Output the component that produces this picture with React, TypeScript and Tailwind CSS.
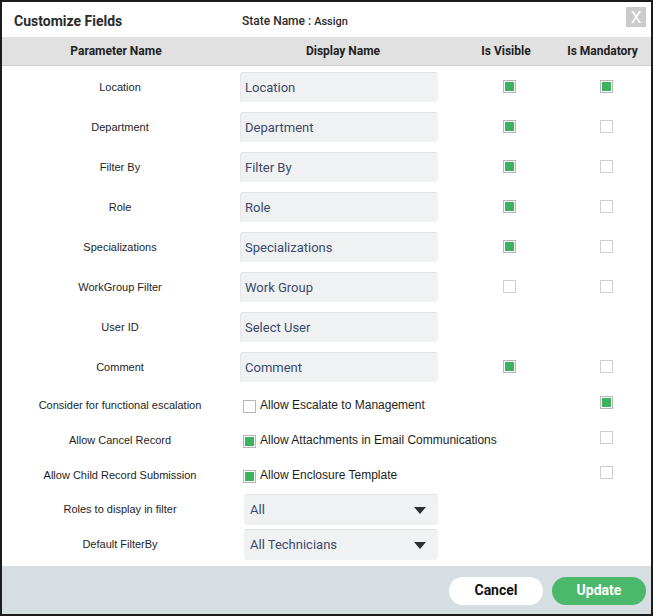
import React from "react";

const Box = ({ checked, light }: { checked?: boolean; light?: boolean }) => (
  <div
    className={`w-[13px] h-[13px] border ${light ? "border-[#cfcfcf]" : "border-[#b8b8b8]"} bg-white p-[1px]`}
  >
    {checked && <div className="w-full h-full bg-[#3cb35e]" />}
  </div>
);

const rows: { label: string; value: string; vis: boolean | null; man: boolean | null }[] = [
  { label: "Location", value: "Location", vis: true, man: true },
  { label: "Department", value: "Department", vis: true, man: false },
  { label: "Filter By", value: "Filter By", vis: true, man: false },
  { label: "Role", value: "Role", vis: true, man: false },
  { label: "Specializations", value: "Specializations", vis: true, man: false },
  { label: "WorkGroup Filter", value: "Work Group", vis: false, man: false },
  { label: "User ID", value: "Select User", vis: null, man: null },
  { label: "Comment", value: "Comment", vis: true, man: false },
];

const opts = [
  { label: "Consider for functional escalation", text: "Allow Escalate to Management", c: false, man: true },
  { label: "Allow Cancel Record", text: "Allow Attachments in Email Communications", c: true, man: false },
  { label: "Allow Child Record Submission", text: "Allow Enclosure Template", c: true, man: false },
];

const selects = [
  { label: "Roles to display in filter", value: "All" },
  { label: "Default FilterBy", value: "All Technicians" },
];

export default function App() {
  const lab = "text-[11px] text-[#1e1e1e] font-['Liberation_Sans',Arial,sans-serif] pl-[8px]";
  return (
    <div className="w-[653px] h-[616px] border-2 border-[#1c1c1c] bg-white flex flex-col font-['Roboto',sans-serif] overflow-hidden">
      {/* header */}
      <div className="h-[35px] flex items-center relative shrink-0 pt-[4px]">
        <div className="pl-[12px] w-[240px] text-[14px] font-bold text-[#2b2b2b]">Customize Fields</div>
        <div className="text-[12px] font-medium text-[#2b2b2b]">
          State Name : <span className="text-[11px]">Assign</span>
        </div>
        <div className="absolute right-[5px] top-[5px] w-[20px] h-[20px] bg-[#cbcbcb] text-white text-[17px] leading-[20px] text-center">
          X
        </div>
      </div>
      {/* table header */}
      <div className="h-[29px] shrink-0 bg-[#e1e1e1] border-b border-[#cfcfcf] grid grid-cols-[228px_230px_98px_1fr] items-center text-[12px] font-bold text-[#222]">
        <div className="text-center">Parameter Name</div>
        <div className="text-center pr-[4px]">Display Name</div>
        <div className="text-center pr-[6px]">Is Visible</div>
        <div className="text-center pr-[4px]">Is Mandatory</div>
      </div>
      {/* rows */}
      <div className="flex flex-col pt-[1px]">
        {rows.map((r) => (
          <div key={r.label} className="h-[40px] grid grid-cols-[228px_230px_98px_1fr] items-center">
            <div className={`text-center ${lab}`}>{r.label}</div>
            <div className="pl-[10px]">
              <div className="w-[198px] h-[30px] rounded-[3px] bg-[#f0f1f3] border-t border-[#e2e3e6] shadow-[inset_1px_0_0_#e6e7ea] flex items-center pl-[5px] text-[13px] text-[#3a4a6c]">
                {r.value}
              </div>
            </div>
            <div className="flex justify-center pb-[1px]">{r.vis !== null && <Box checked={r.vis} light={!r.vis} />}</div>
            <div className="flex justify-center pl-[4px] pb-[1px]">{r.man !== null && <Box checked={r.man} light={!r.man} />}</div>
          </div>
        ))}
        {opts.map((o) => (
          <div key={o.label} className="h-[35px] grid grid-cols-[228px_230px_98px_1fr] items-center">
            <div className={`text-center ${lab} pt-[2px]`}>{o.label}</div>
            <div className="pl-[13px] flex items-center gap-[4px] whitespace-nowrap">
              <div className="mt-[3px]">
                <Box checked={o.c} />
              </div>
              <span className="text-[12px] text-[#1e1e1e] font-['Liberation_Sans',Arial,sans-serif]">{o.text}</span>
            </div>
            <div />
            <div className="flex justify-center pl-[4px] mb-[4px]">
              <Box checked={o.man} light={!o.man} />
            </div>
          </div>
        ))}
        {selects.map((s) => (
          <div key={s.label} className="h-[35px] grid grid-cols-[228px_230px_98px_1fr] items-center">
            <div className={`text-center ${lab}`}>{s.label}</div>
            <div className="pl-[14px]">
              <div className="w-[194px] h-[31px] rounded-[3px] bg-[#f0f1f3] border-t border-[#e2e3e6] flex items-center justify-between pl-[6px] pr-[12px] text-[13px] text-[#3a4a6c]">
                <span>{s.value}</span>
                <svg width="12" height="7" viewBox="0 0 12 7">
                  <path d="M0 0 L12 0 L6 7 Z" fill="#2e2e2e" />
                </svg>
              </div>
            </div>
            <div />
            <div />
          </div>
        ))}
      </div>
      <div className="flex-1" />
      {/* footer */}
      <div className="h-[48px] shrink-0 bg-[#d7dee1] flex items-center justify-end gap-[9px] pr-[5px] pt-[1px]">
        <button className="w-[94px] h-[28px] rounded-full bg-white text-[14px] font-bold text-[#111]">Cancel</button>
        <button className="w-[94px] h-[28px] rounded-full bg-[#4cb86b] text-[14px] font-bold text-white">Update</button>
      </div>
    </div>
  );
}
